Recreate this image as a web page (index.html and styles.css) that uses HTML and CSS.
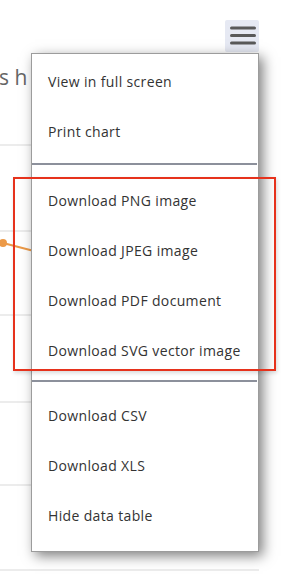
FILE: index.html
```html
<!DOCTYPE html>
<html lang="en">
<head>
    <meta charset="UTF-8">
    <title>Chart export menu</title>
    <link rel="stylesheet" href="styles.css">
</head>
<body>

<div class="chart">
    <svg class="chart-canvas" width="298" height="582" viewBox="0 0 298 582">
        <text class="chart-title" x="-1" y="85">s h</text>
        <g class="grid">
            <rect x="0" y="144" width="259" height="2"></rect>
            <rect x="0" y="230" width="259" height="2"></rect>
            <rect x="0" y="314" width="259" height="2"></rect>
            <rect x="0" y="401" width="259" height="2"></rect>
            <rect x="0" y="484" width="259" height="2"></rect>
            <rect x="0" y="569" width="259" height="2"></rect>
        </g>
        <line class="series" x1="3" y1="243" x2="34" y2="251"></line>
        <circle class="series-point" cx="3" cy="243" r="4"></circle>
    </svg>

    <button class="menu-button" aria-label="Chart context menu">
        <svg width="34" height="32" viewBox="0 0 34 32">
            <line x1="6.5" y1="8" x2="29.5" y2="8"></line>
            <line x1="6.5" y1="15.5" x2="29.5" y2="15.5"></line>
            <line x1="6.5" y1="23" x2="29.5" y2="23"></line>
        </svg>
    </button>

    <ul class="menu">
        <li class="menu-item">View in full screen</li>
        <li class="menu-item">Print chart</li>
        <li class="menu-sep sep-first"></li>
        <li class="menu-item">Download PNG image</li>
        <li class="menu-item">Download JPEG image</li>
        <li class="menu-item">Download PDF document</li>
        <li class="menu-item">Download SVG vector image</li>
        <li class="menu-sep sep-second"></li>
        <li class="menu-item">Download CSV</li>
        <li class="menu-item">Download XLS</li>
        <li class="menu-item">Hide data table</li>
    </ul>

    <div class="highlight"></div>
</div>

</body>
</html>
```

FILE: styles.css
```css
body {
    margin: 0;
    background: #fff;
    font-family: "Open Sans", Arial, sans-serif;
}
.chart {
    position: relative;
    width: 298px;
    height: 582px;
    overflow: hidden;
}
.chart-canvas {
    display: block;
}
.chart-title {
    font-family: "Open Sans", Arial, sans-serif;
    font-size: 21px;
    fill: #666;
}
.grid rect {
    fill: #ececec;
}
.series {
    stroke: #ec9a48;
    stroke-width: 2;
}
.series-point {
    fill: #ec9a48;
}
.menu-button {
    position: absolute;
    left: 225px;
    top: 20px;
    width: 34px;
    height: 32px;
    padding: 0;
    border: 0;
    border-radius: 2px;
    background: #e6e9f3;
}
.menu-button svg {
    display: block;
}
.menu-button line {
    stroke: #595959;
    stroke-width: 3;
    stroke-linecap: round;
}
.menu {
    position: absolute;
    left: 31px;
    top: 53px;
    width: 226px;
    margin: 0;
    padding: 3px 0 10px;
    list-style: none;
    background: #fff;
    border: 1px solid #9c9c9c;
    box-shadow: 4px 4px 12px rgba(0, 0, 0, 0.5);
}
.menu-item {
    height: 50px;
    line-height: 50px;
    padding-left: 16px;
    font-size: 14px;
    letter-spacing: 0.35px;
    color: #333;
    white-space: nowrap;
}
.menu-sep {
    height: 2px;
    background: #8c909b;
}
.sep-first {
    margin: 6px 1px 11px 0;
}
.sep-second {
    margin: 4px 1px 9px 0;
}
.highlight {
    position: absolute;
    left: 13px;
    top: 177px;
    width: 259px;
    height: 190px;
    border: 2px solid #e6321c;
    box-shadow: 1px 2px 4px rgba(0, 0, 0, 0.15);
}
```
